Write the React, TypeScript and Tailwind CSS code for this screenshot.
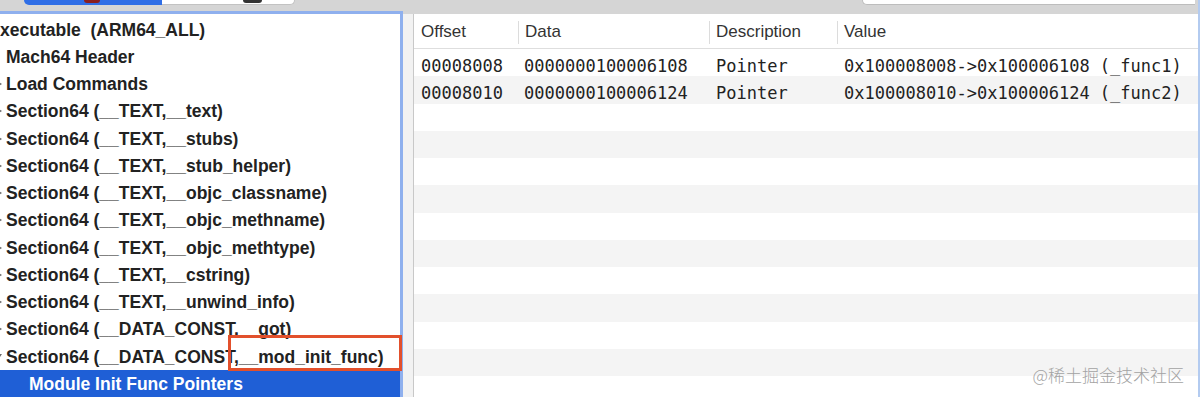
import React from 'react';

const treeRows: { label: string; indent: number; mark: 'none' | 'closed' | 'open' }[] = [
  { label: 'xecutable  (ARM64_ALL)', indent: 0, mark: 'none' },
  { label: 'Mach64 Header', indent: 6, mark: 'none' },
  { label: 'Load Commands', indent: 6, mark: 'closed' },
  { label: 'Section64 (__TEXT,__text)', indent: 6, mark: 'closed' },
  { label: 'Section64 (__TEXT,__stubs)', indent: 6, mark: 'closed' },
  { label: 'Section64 (__TEXT,__stub_helper)', indent: 6, mark: 'closed' },
  { label: 'Section64 (__TEXT,__objc_classname)', indent: 6, mark: 'closed' },
  { label: 'Section64 (__TEXT,__objc_methname)', indent: 6, mark: 'closed' },
  { label: 'Section64 (__TEXT,__objc_methtype)', indent: 6, mark: 'closed' },
  { label: 'Section64 (__TEXT,__cstring)', indent: 6, mark: 'closed' },
  { label: 'Section64 (__TEXT,__unwind_info)', indent: 6, mark: 'closed' },
  { label: 'Section64 (__DATA_CONST,__got)', indent: 6, mark: 'closed' },
  { label: 'Section64 (__DATA_CONST,__mod_init_func)', indent: 6, mark: 'open' },
];

const dataRows = [
  ['00008008', '0000000100006108', 'Pointer', '0x100008008->0x100006108 (_func1)'],
  ['00008010', '0000000100006124', 'Pointer', '0x100008010->0x100006124 (_func2)'],
];

function Mark({ kind }: { kind: 'none' | 'closed' | 'open' }) {
  // disclosure triangles, mostly clipped by the left edge
  return (
    <div className="w-[6px] h-full shrink-0 flex items-center">
      {kind === 'closed' && (
        <svg width="6" height="10" viewBox="0 0 6 10">
          <polygon points="-5,1 2,5 -5,9" fill="#6b6b6b" />
        </svg>
      )}
      {kind === 'open' && (
        <svg width="6" height="10" viewBox="0 0 6 10">
          <polygon points="-6,2 2,2 -2,8" fill="#6b6b6b" />
        </svg>
      )}
    </div>
  );
}

export default function App() {
  const empty = Array.from({ length: 11 });

  return (
    <div className="relative w-[1200px] h-[397px] overflow-hidden bg-[#d5d5d5] flex flex-col border-r-2 border-[#b3cbf0] font-['Liberation_Sans',Arial,sans-serif] text-[#222]">
      {/* toolbar remnants */}
      <div className="h-[11px] shrink-0 flex">
        <div className="ml-[24px] flex h-[5px]">
          <div className="w-[138px] h-full bg-[#2f6ee6] rounded-bl-[5px] flex justify-center">
            <div className="ml-[-2px] w-[16px] h-[3px] bg-[#8a1f1f] rounded-b-[3px]" />
          </div>
          <div className="w-[133px] h-full bg-white rounded-br-[5px] border-b border-r border-[#c2c2c2] flex">
            <div className="ml-[81px] w-[19px] h-[3px] bg-[#333] rounded-b-[4px]" />
          </div>
        </div>
        <div className="ml-auto mr-[3px] w-[333px] h-[5px] bg-white rounded-bl-[6px] border-b border-l border-[#bdbdbd]" />
      </div>

      <div className="flex flex-1 min-h-0">
        {/* tree */}
        <div className="w-[403px] shrink-0 bg-white border-t-[3px] border-r-[3px] border-[#8fb0ee] pt-[2px] flex flex-col overflow-hidden text-[17.5px] font-bold">
          {treeRows.map((r) => (
            <div key={r.label} className="h-[27.25px] shrink-0 flex items-center whitespace-pre">
              {r.indent > 0 ? <Mark kind={r.mark} /> : null}
              <span>{r.label}</span>
            </div>
          ))}
          <div className="h-[27.25px] shrink-0 flex items-center bg-[#1f5fd6] text-white pl-[29px]">
            Module Init Func Pointers
          </div>
        </div>

        {/* table side */}
        <div className="flex-1 pt-[3px] flex">
          <div className="w-[11px] shrink-0 bg-[#f2f2f2] border-r border-[#c8c8c8]" />
          <div className="flex-1 bg-white flex flex-col">
            <div className="h-[35px] shrink-0 border-b border-[#dedede] flex items-center pt-[2px] text-[17px] text-[#333]">
              <div className="w-[104px] pl-[7px]">Offset</div>
              <div className="w-[191px] flex items-center">
                <div className="w-px h-[23px] bg-[#dcdcdc]" />
                <span className="pl-[6px]">Data</span>
              </div>
              <div className="w-[128px] flex items-center">
                <div className="w-px h-[23px] bg-[#dcdcdc]" />
                <span className="pl-[6px]">Description</span>
              </div>
              <div className="flex-1 flex items-center">
                <div className="w-px h-[23px] bg-[#dcdcdc]" />
                <span className="pl-[6px]">Value</span>
              </div>
            </div>

            <div className="flex flex-col font-['DejaVu_Sans_Mono',monospace] text-[17px]">
              {dataRows.map((row, i) => (
                <div
                  key={row[0]}
                  className={`h-[27.25px] shrink-0 flex items-start pt-[8px] leading-[18px] whitespace-pre ${i % 2 === 1 ? 'bg-[#f4f4f4]' : 'bg-white'}`}
                >
                  <div className="w-[104px] pl-[7px]">{row[0]}</div>
                  <div className="w-[191px] pl-[6px]">{row[1]}</div>
                  <div className="w-[128px] pl-[7px]">{row[2]}</div>
                  <div className="flex-1 pl-[7px]">{row[3]}</div>
                </div>
              ))}
              {empty.map((_, j) => (
                <div
                  key={j}
                  className={`h-[27.25px] shrink-0 ${(j + dataRows.length) % 2 === 1 ? 'bg-[#f4f4f4]' : 'bg-white'}`}
                />
              ))}
            </div>
          </div>
        </div>
      </div>

      {/* annotation box */}
      <div className="absolute left-[228px] top-[335px] w-[174px] h-[36px] border-[3px] border-[#e2502c]" />

      {/* watermark */}
      <div className="absolute right-[14px] top-[362px] text-[17px] text-[#a3a3a3] font-['Noto_Sans_CJK_SC',sans-serif] font-light">
        @稀土掘金技术社区
      </div>
    </div>
  );
}
